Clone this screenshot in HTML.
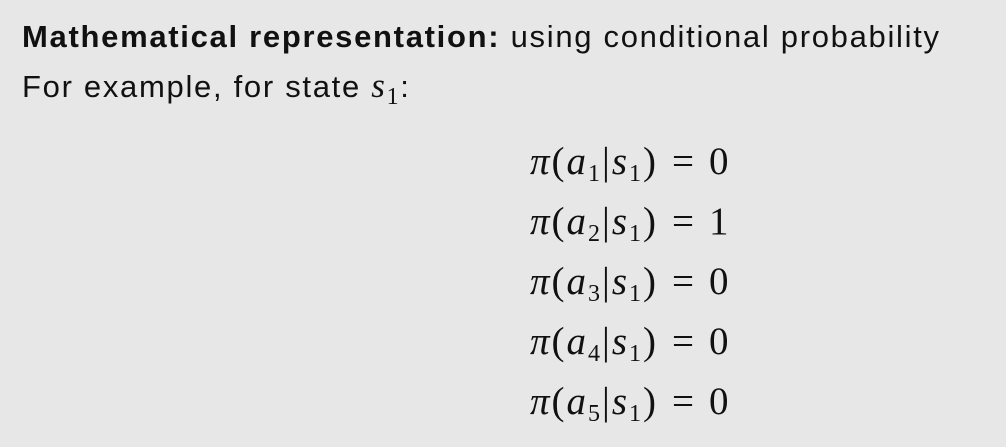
<!DOCTYPE html>
<html><head><meta charset="utf-8"><style>
body{margin:0;width:1006px;height:447px;background:#e7e7e7;overflow:hidden;position:relative;font-family:"Liberation Sans",sans-serif;color:#111}
.l{position:absolute;left:22px;font-size:31px;letter-spacing:1.7px;white-space:nowrap}
.m{position:absolute;left:530px;font-family:"Liberation Serif",serif;font-size:39px;letter-spacing:2px;white-space:nowrap;color:#111}
i{font-style:italic}
sub{font-size:24px;vertical-align:-7px;font-style:normal}
.e{padding:0 13px 0 14px}
</style></head><body>
<div class="l" style="top:19px"><b>Mathematical representation:</b> using conditional probability</div>
<div class="l" style="top:66px">For example, for state <span style="font-family:'Liberation Serif',serif;font-size:35px"><i>s</i><sub>1</sub></span>:</div>
<div class="m" style="top:139px"><i>π</i>(<i>a</i><sub>1</sub>|<i>s</i><sub>1</sub>)<span class="e">=</span>0</div>
<div class="m" style="top:199px"><i>π</i>(<i>a</i><sub>2</sub>|<i>s</i><sub>1</sub>)<span class="e">=</span>1</div>
<div class="m" style="top:259px"><i>π</i>(<i>a</i><sub>3</sub>|<i>s</i><sub>1</sub>)<span class="e">=</span>0</div>
<div class="m" style="top:319px"><i>π</i>(<i>a</i><sub>4</sub>|<i>s</i><sub>1</sub>)<span class="e">=</span>0</div>
<div class="m" style="top:379px"><i>π</i>(<i>a</i><sub>5</sub>|<i>s</i><sub>1</sub>)<span class="e">=</span>0</div>
</body></html>
